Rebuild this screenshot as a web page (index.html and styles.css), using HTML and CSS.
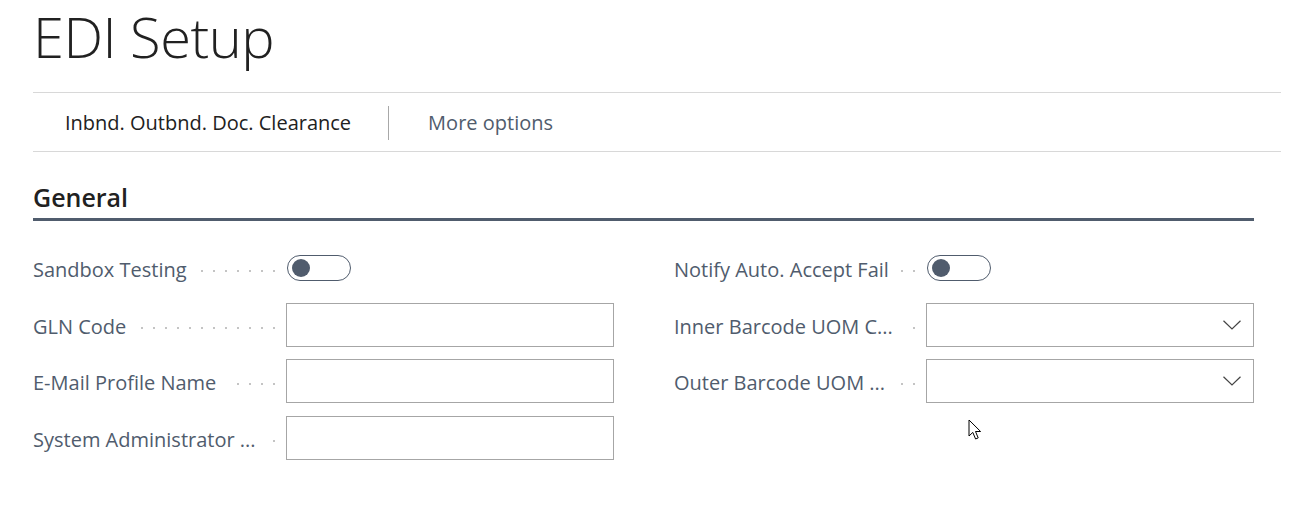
FILE: index.html
```html
<!DOCTYPE html>
<html lang="en">
<head>
<meta charset="utf-8">
<title>EDI Setup</title>
<link rel="stylesheet" href="styles.css">
</head>
<body>
<div class="page">
  <h1 class="title">EDI Setup</h1>
  <nav class="actions">
    <span class="action primary">Inbnd. Outbnd. Doc. Clearance</span>
    <span class="sep"></span>
    <span class="action more">More options</span>
  </nav>
  <section class="group">
    <h2 class="group-title">General</h2>
    <div class="columns">
      <div class="col">
        <div class="row">
          <div class="caption"><span class="label">Sandbox Testing</span></div>
          <div class="ctl"><span class="toggle"><span class="knob"></span></span></div>
        </div>
        <div class="row">
          <div class="caption"><span class="label">GLN Code</span></div>
          <div class="ctl"><span class="input"></span></div>
        </div>
        <div class="row">
          <div class="caption"><span class="label">E-Mail Profile Name</span></div>
          <div class="ctl"><span class="input"></span></div>
        </div>
        <div class="row">
          <div class="caption"><span class="label">System Administrator ...</span></div>
          <div class="ctl"><span class="input"></span></div>
        </div>
      </div>
      <div class="col">
        <div class="row">
          <div class="caption"><span class="label">Notify Auto. Accept Fail</span></div>
          <div class="ctl"><span class="toggle"><span class="knob"></span></span></div>
        </div>
        <div class="row">
          <div class="caption"><span class="label">Inner Barcode UOM C...</span></div>
          <div class="ctl"><span class="input select"><svg class="chev" width="18" height="10" viewBox="0 0 18 10"><path d="M0.5 0.8 L9 9 L17.5 0.8" fill="none" stroke="#444" stroke-width="1.2"/></svg></span></div>
        </div>
        <div class="row">
          <div class="caption"><span class="label">Outer Barcode UOM ...</span></div>
          <div class="ctl"><span class="input select"><svg class="chev" width="18" height="10" viewBox="0 0 18 10"><path d="M0.5 0.8 L9 9 L17.5 0.8" fill="none" stroke="#444" stroke-width="1.2"/></svg></span></div>
        </div>
      </div>
    </div>
  </section>
</div>
<svg class="cursor" width="14" height="22" viewBox="0 0 14 22"><path d="M1 1 L1 17 L4.8 13.4 L7.6 20 L10.2 18.9 L7.5 12.5 L12.6 12.5 Z" fill="#fff" stroke="#000" stroke-width="1" stroke-linejoin="round"/></svg>
</body>
</html>
```
FILE: styles.css
```css
* { box-sizing: border-box; }
html, body { margin: 0; padding: 0; background: #fff; }
body {
  font-family: "Open Sans", "Noto Sans", sans-serif;
  color: #212121;
  position: relative;
  width: 1311px;
  height: 505px;
  overflow: hidden;
}
.page { padding: 0 30px 0 33px; }
.title {
  margin: 0;
  height: 92px;
  font-size: 56px;
  font-weight: 300;
  line-height: 72px;
  color: #212121;
  letter-spacing: -0.5px;
}
.actions {
  display: flex;
  align-items: center;
  height: 60px;
  border-top: 1px solid #d8d8d8;
  border-bottom: 1px solid #d8d8d8;
  padding-left: 32px;
  padding-top: 2px;
}
.action { font-size: 20px; line-height: 26px; }
.primary { color: #212121; }
.more { color: #505c6d; }
.sep {
  width: 1px;
  height: 34px;
  background: #a8a8a8;
  margin: 0 39px 0 37px;
}
.group { width: 1221px; }
.group-title {
  margin: 0;
  padding-top: 28px;
  height: 69px;
  font-size: 25px;
  font-weight: 600;
  line-height: 34px;
  color: #212121;
  border-bottom: 3px solid #505c6d;
}
.columns {
  display: grid;
  grid-template-columns: 581px 580px;
  column-gap: 60px;
  padding-top: 25px;
}
.col { display: flex; flex-direction: column; row-gap: 12.5px; }
.row {
  display: flex;
  align-items: center;
  height: 44px;
}
.caption {
  flex: 1;
  display: flex;
  align-items: center;
  height: 44px;
  margin-right: 6px;
  background-image: radial-gradient(circle, #c4c4c4 1px, transparent 1.3px);
  background-size: 12px 4px;
  background-position: right 0 top 23px;
  background-repeat: repeat-x;
}
.label {
  font-size: 20px;
  color: #505c6d;
  white-space: nowrap;
  line-height: 26px;
  background: #fff;
  padding-right: 11px;
  margin-top: 4px;
}
.ctl { width: 328px; flex: none; display: flex; align-items: center; }
.toggle {
  display: block;
  width: 64px;
  height: 26px;
  border: 1px solid #505c6d;
  border-radius: 13px;
  position: relative;
  margin-left: 1px;
}
.knob {
  position: absolute;
  left: 4px;
  top: 3px;
  width: 18px;
  height: 18px;
  border-radius: 50%;
  background: #505c6d;
}
.input {
  display: flex;
  width: 328px;
  height: 44px;
  border: 1px solid #a6a6a6;
  background: #fff;
}
.select { justify-content: flex-end; align-items: center; padding-right: 12px; }
.chev { display: block; }
.cursor { position: absolute; left: 968px; top: 419px; }
```
